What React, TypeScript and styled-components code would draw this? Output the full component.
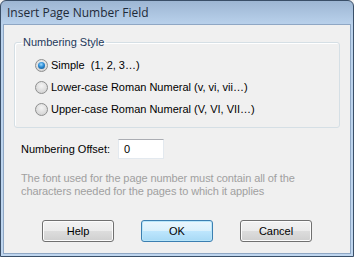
import React from "react";
import styled, { createGlobalStyle } from "styled-components";

const Global = createGlobalStyle`
  html, body { margin: 0; padding: 0; background: #f0f0f0; }
  body { width: 354px; height: 257px; overflow: hidden; }
`;

const UI_FONT = `"Liberation Sans", "DejaVu Sans", sans-serif`;

const Window = styled.div`
  box-sizing: border-box;
  width: 354px;
  height: 257px;
  border: 1px solid #3a4f68;
  border-radius: 6px 6px 0 0;
  background: linear-gradient(to bottom, #9db6d3 0px, #bad2ec 24px, #bfd6ef 100%);
  display: flex;
  flex-direction: column;
  font-family: ${UI_FONT};
  font-size: 11px;
  color: #000;
`;

const TitleBar = styled.div`
  height: 23px;
  display: flex;
  align-items: center;
  padding-left: 6px;
  font-family: "Open Sans", "Noto Sans", sans-serif;
  font-size: 12px;
  color: #1e2a38;
`;

const Client = styled.div`
  flex: 1;
  margin: 0 2px 2px 2px;
  border: 1px solid #8fa7c4;
  background: #f0f0f0;
  display: flex;
  flex-direction: column;
  padding: 11px 10px 0 10px;
`;

const Group = styled.fieldset`
  margin: 0;
  border: 1px solid #d5dfe5;
  border-radius: 3px;
  box-shadow: inset 1px 1px 0 #fff;
  padding: 5px 6px 7px 6px;
  display: flex;
  flex-direction: column;
`;

const Legend = styled.legend`
  padding: 0 2px;
  color: #1e395b;
  line-height: 13px;
`;

const RadioRow = styled.label`
  display: flex;
  align-items: center;
  height: 22px;
  padding-left: 14px;
  gap: 3px;
  white-space: pre;
`;

const RadioCircle = styled.span<{ $checked?: boolean }>`
  position: relative;
  box-sizing: border-box;
  width: 13px;
  height: 13px;
  border-radius: 50%;
  border: 1px solid #8e8f8f;
  background: radial-gradient(circle at 50% 35%, #f4f4f4 0%, #d8d8d8 70%, #c8c8c8 100%);
  flex: none;
  &::after {
    content: "";
    display: ${(p) => (p.$checked ? "block" : "none")};
    position: absolute;
    left: 2px;
    top: 2px;
    width: 7px;
    height: 7px;
    border-radius: 50%;
    background: radial-gradient(circle at 45% 35%, #9fdcff 0%, #2a8ad4 45%, #0d4b80 100%);
  }
`;

const OffsetRow = styled.div`
  display: flex;
  align-items: center;
  margin-top: 11px;
  padding-left: 7px;
  gap: 8px;
`;

const Input = styled.div`
  box-sizing: border-box;
  width: 46px;
  height: 20px;
  border: 1px solid #e3e9ef;
  border-top-color: #abadb3;
  background: #fff;
  display: flex;
  align-items: center;
  padding-left: 5px;
`;

const Note = styled.p`
  margin: 13px 0 0 0;
  padding-left: 7px;
  color: #a0a0a0;
  line-height: 12.5px;
  letter-spacing: -0.1px;
`;

const ButtonRow = styled.div`
  display: flex;
  justify-content: center;
  gap: 27px;
  margin-top: 23px;
`;

const Button = styled.button<{ $default?: boolean }>`
  box-sizing: border-box;
  width: 72px;
  height: 22px;
  font-family: ${UI_FONT};
  font-size: 11px;
  color: #000;
  border-radius: 3px;
  padding: 0;
  border: 1px solid ${(p) => (p.$default ? "#3c7fb1" : "#707070")};
  background: ${(p) =>
    p.$default
      ? "linear-gradient(to bottom, #eaf6fd 0%, #d9f0fc 50%, #bee6fd 50%, #a7d9f5 100%)"
      : "linear-gradient(to bottom, #f2f2f2 0%, #ebebeb 50%, #dddddd 50%, #cfcfcf 100%)"};
  box-shadow: inset 0 0 0 1px ${(p) => (p.$default ? "#b9e6fa" : "#fcfcfc")};
`;

export default function App() {
  return (
    <>
      <Global />
      <Window>
        <TitleBar>Insert Page Number Field</TitleBar>
        <Client>
          <Group>
            <Legend>Numbering Style</Legend>
            <RadioRow>
              <RadioCircle $checked />
              {"Simple  (1, 2, 3…)"}
            </RadioRow>
            <RadioRow>
              <RadioCircle />
              Lower-case Roman Numeral (v, vi, vii…)
            </RadioRow>
            <RadioRow>
              <RadioCircle />
              Upper-case Roman Numeral (V, VI, VII…)
            </RadioRow>
          </Group>
          <OffsetRow>
            <span>Numbering Offset:</span>
            <Input>0</Input>
          </OffsetRow>
          <Note>
            The font used for the page number must contain all of the
            <br />
            characters needed for the pages to which it applies
          </Note>
          <ButtonRow>
            <Button>Help</Button>
            <Button $default>OK</Button>
            <Button>Cancel</Button>
          </ButtonRow>
        </Client>
      </Window>
    </>
  );
}
